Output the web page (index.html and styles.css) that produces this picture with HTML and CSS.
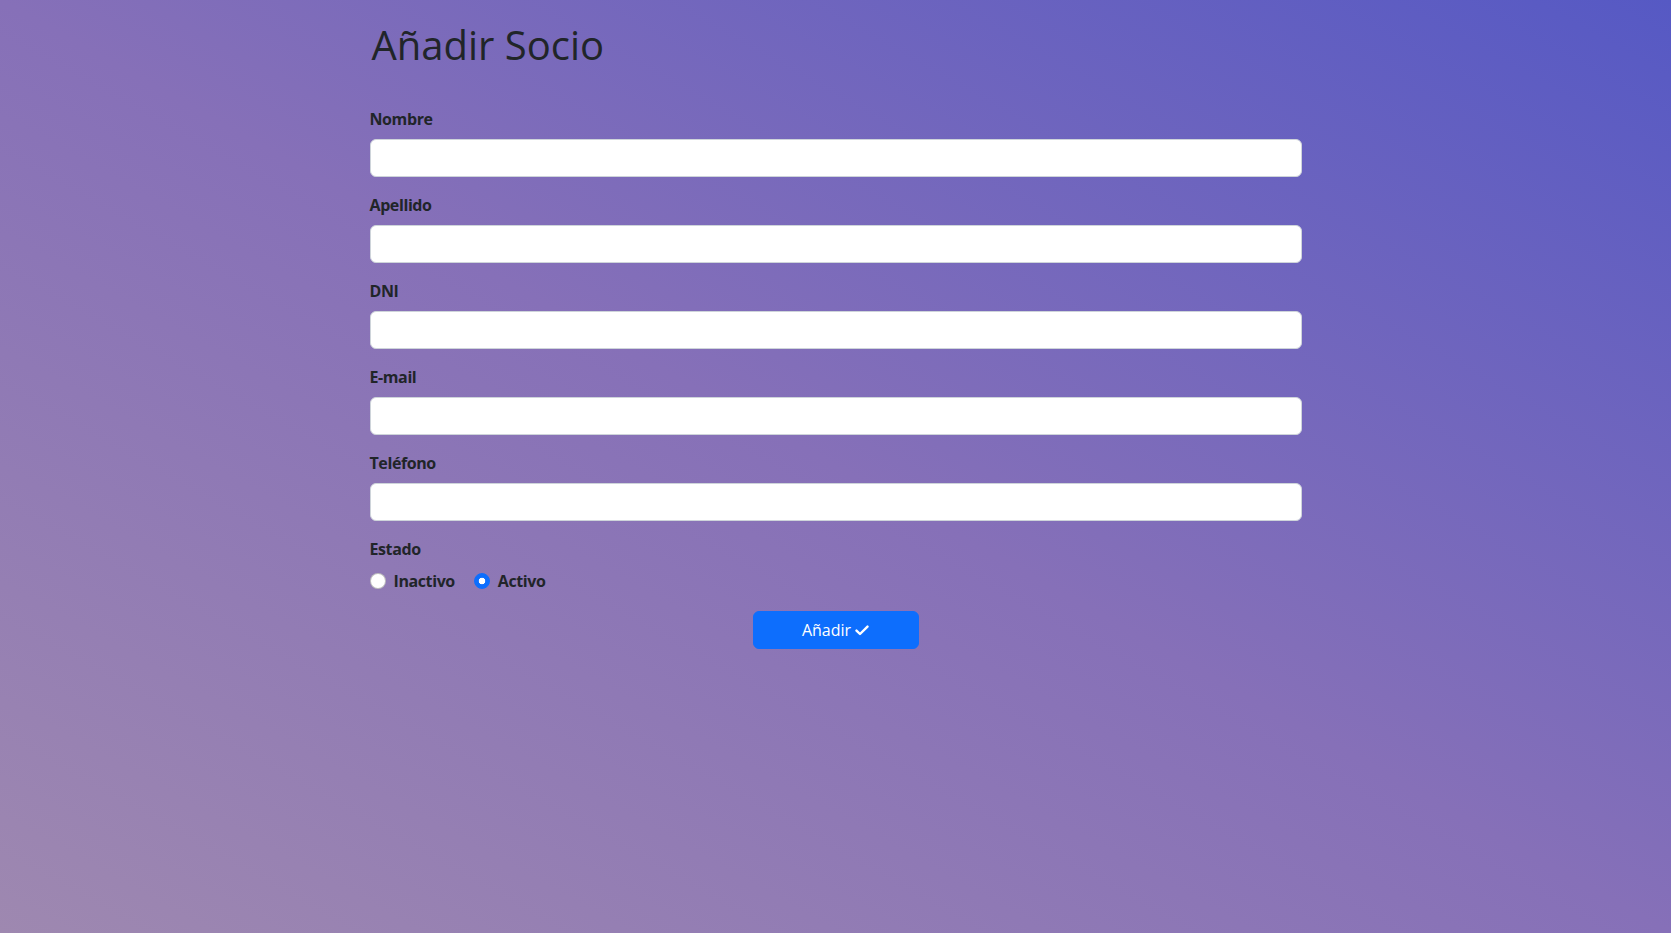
FILE: index.html
```html
<!DOCTYPE html>
<html lang="es">
<head>
<meta charset="utf-8">
<title>Añadir Socio</title>
<link rel="stylesheet" href="styles.css">
</head>
<body>
<main class="page">
  <h1 class="title">Añadir Socio</h1>
  <form class="form">
    <div class="field">
      <label class="label" for="nombre">Nombre</label>
      <input class="input" id="nombre" type="text">
    </div>
    <div class="field">
      <label class="label" for="apellido">Apellido</label>
      <input class="input" id="apellido" type="text">
    </div>
    <div class="field">
      <label class="label" for="dni">DNI</label>
      <input class="input" id="dni" type="text">
    </div>
    <div class="field">
      <label class="label" for="email">E-mail</label>
      <input class="input" id="email" type="email">
    </div>
    <div class="field">
      <label class="label" for="telefono">Teléfono</label>
      <input class="input" id="telefono" type="text">
    </div>
    <div class="field">
      <span class="label">Estado</span>
      <div class="radios">
        <label class="radio"><input class="radio-input" type="radio" name="estado" value="0"><span class="radio-text">Inactivo</span></label>
        <label class="radio"><input class="radio-input" type="radio" name="estado" value="1" checked><span class="radio-text">Activo</span></label>
      </div>
    </div>
    <div class="actions">
      <button class="btn" type="button">Añadir
        <svg class="btn-icon" width="14" height="11" viewBox="0 0 14 11" aria-hidden="true"><path d="M1.5 5.6 L5 9 L12.5 1.6" fill="none" stroke="#fff" stroke-width="2.4" stroke-linecap="round" stroke-linejoin="round"/></svg>
      </button>
    </div>
  </form>
</main>
</body>
</html>
```
FILE: styles.css
```css
html {
  height: 100%;
  background: linear-gradient(to top right, #9e88b0 0%, #8670b8 50%, #5659c4 100%);
}

body {
  margin: 0;
  min-height: 100%;
  font-family: "Open Sans", "Noto Sans", sans-serif;
  color: #212529;
}

.page {
  width: 932px;
  margin: 0 auto;
  padding-top: 21px;
}

.title {
  margin: 0 0 0 2px;
  font-size: 40px;
  font-weight: 400;
  line-height: 48px;
  color: #212529;
}

.form {
  margin-top: 38px;
  display: flex;
  flex-direction: column;
}

.field {
  display: flex;
  flex-direction: column;
  margin-bottom: 16px;
}

.label {
  font-size: 16px;
  font-weight: 700;
  line-height: 24px;
  letter-spacing: -0.4px;
  margin-bottom: 8px;
}

.input {
  box-sizing: border-box;
  height: 38px;
  width: 100%;
  margin: 0;
  padding: 6px 12px;
  border: 1px solid #ced4da;
  border-radius: 6px;
  background: #fff;
  font: 16px/24px "Open Sans", sans-serif;
  color: #212529;
  outline: none;
}

.radios {
  display: flex;
  height: 24px;
  margin-bottom: 2px;
}

.radio {
  display: flex;
  align-items: center;
  gap: 8px;
  margin-right: 19px;
  font-size: 16px;
  font-weight: 700;
  line-height: 24px;
}

.radio-text {
  letter-spacing: -0.4px;
}

.radio-input {
  appearance: none;
  -webkit-appearance: none;
  box-sizing: border-box;
  width: 16px;
  height: 16px;
  margin: 0;
  border: 1px solid rgba(0, 0, 0, 0.25);
  border-radius: 50%;
  background: #fff;
}

.radio-input:checked {
  border-color: #0d6efd;
  background: radial-gradient(circle, #fff 0 3px, #0d6efd 3.6px);
}

.actions {
  display: flex;
  justify-content: center;
}

.btn {
  box-sizing: border-box;
  width: 166px;
  height: 38px;
  display: inline-flex;
  align-items: center;
  justify-content: center;
  gap: 4px;
  padding: 6px 12px;
  border: 1px solid #0d6efd;
  border-radius: 6px;
  background: #0d6efd;
  color: #fff;
  font: 400 16px/24px "Open Sans", sans-serif;
  cursor: pointer;
}

.btn-icon {
  display: block;
}
```
